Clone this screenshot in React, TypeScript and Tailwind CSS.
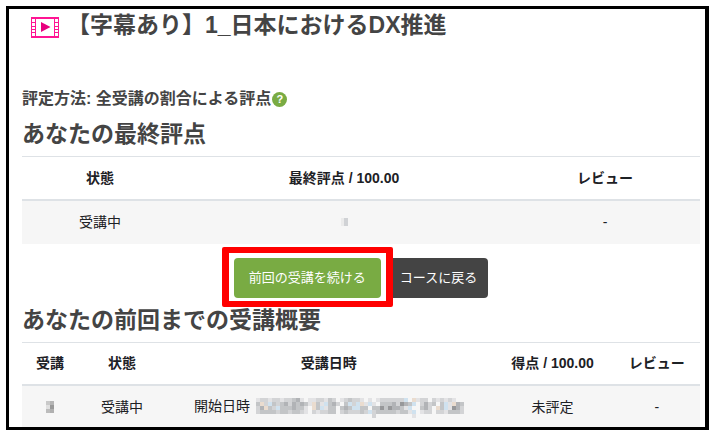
import React from 'react';

// Shade of every tile that hides the date, one string per row of tiles
const dateTiles = [
  '122122122341.1122132.123221.1.1222222b.p122.212121..',
  '3p2b3234243431p31b342.3b2bp1b1.33342543b.2423.3b1p43',
  '24p32b3334331.p3b133.343bb33.335354431b..342.p3b1542',
  '2333323323321.212233.2322232b2333332331b.122.2213332',
  '.............................2.........1............',
];

const tileFill: Record<string, string> = {
  '1': '#e3e3e5',
  '2': '#d3d4d6',
  '3': '#c3c5c7',
  '4': '#b1b3b6',
  '5': '#97989a',
  p: '#eadccf',
  b: '#d0e2ef',
};

function VideoIcon() {
  return (
    <svg viewBox="0 0 28 21" className="mt-2 h-[21px] w-7 shrink-0" aria-hidden="true" shapeRendering="crispEdges">
      <path
        d="M0 0H28V21H0Z M5 2V19H23V2Z M1 2V5H4V2Z M1 6V9H4V6Z M1 10V12H4V10Z M1 13V15H4V13Z M1 16V19H4V16Z M24 2V5H27V2Z M24 6V9H27V6Z M24 10V12H27V10Z M24 13V15H27V13Z M24 16V19H27V16Z"
        fill="#ff1493"
        fillRule="evenodd"
      />
      <path d="M10 5L19.5 10L10 15Z" fill="#e8007f" shapeRendering="auto" />
    </svg>
  );
}

function HiddenDate() {
  return (
    <svg
      viewBox="0 0 208 20"
      className="mt-0.5 ml-0.5 inline-block h-5 w-52 align-top"
      aria-hidden="true"
      shapeRendering="crispEdges"
    >
      {dateTiles.map((row, y) =>
        row.split('').map((tile, x) =>
          tile === '.' ? null : (
            <rect key={`${x}-${y}`} x={x * 4} y={y * 4} width={4} height={4} fill={tileFill[tile]} />
          )
        )
      )}
    </svg>
  );
}

const headCell = 'h-[43px] border-t border-b-2 border-[#dee2e6] p-0 font-bold text-[#1d2125]';
const bodyCell = 'p-0';

export default function App() {
  return (
    <div className="bg-white pt-1.5 pb-[3px] pl-1.5 pr-[5px] font-['Liberation_Sans','Noto_Sans_CJK_JP',sans-serif] text-[#1d2125]">
      <main className="border-[3px] border-r-4 border-black pl-[13px] pr-[5px]">
        <header className="flex items-start pl-[9px]">
          <VideoIcon />
          <h1 className="ml-2 text-[23px] leading-8 font-bold text-[#444] whitespace-nowrap">
            【字幕あり】1_日本におけるDX推進
          </h1>
        </header>

        <div className="mt-[46px] flex items-center text-base leading-6 font-bold text-[#444]">
          <p>評定方法: 全受講の割合による評点</p>
          <button
            type="button"
            aria-label="評定方法のヘルプ"
            className="ml-px flex size-[15px] items-center justify-center rounded-full bg-[#79ab43] text-[11px] leading-none text-white"
          >
            ?
          </button>
        </div>

        {/* Final grade */}
        <h2 className="mt-[7px] text-[23px] leading-8 font-bold text-[#444]">あなたの最終評点</h2>
        <table className="mt-[6px] w-full table-fixed border-collapse text-center text-sm leading-5">
          <thead>
            <tr>
              <th className={`${headCell} w-[23%]`}>状態</th>
              <th className={`${headCell} w-[49%]`}>最終評点 / 100.00</th>
              <th className={headCell}>レビュー</th>
            </tr>
          </thead>
          <tbody>
            <tr className="h-11 bg-[#f6f6f6]">
              <td className={bodyCell}>受講中</td>
              <td className={bodyCell}>
                <span className="mx-auto flex h-2 w-[7px]">
                  <span className="w-[3px] bg-[#ebebeb]" />
                  <span className="w-1 bg-[#d0d2d5]" />
                </span>
              </td>
              <td className={bodyCell}>-</td>
            </tr>
          </tbody>
        </table>

        {/* Actions */}
        <div className="mt-[14px] flex justify-center gap-2 text-[13px] leading-5 text-white">
          <div className="relative">
            <button type="button" className="h-10 rounded bg-[#79ab43] px-[15px] whitespace-nowrap">
              前回の受講を続ける
            </button>
            <span className="pointer-events-none absolute -inset-x-3 -top-[11px] -bottom-[9px] rounded-xs border-x-[7px] border-y-[6px] border-[#f00]" />
          </div>
          <button type="button" className="h-10 rounded bg-[#444] px-[11px] whitespace-nowrap">
            コースに戻る
          </button>
        </div>

        {/* Previous attempts */}
        <h2 className="mt-[6px] text-[23px] leading-8 font-bold text-[#444]">あなたの前回までの受講概要</h2>
        <table className="mt-[6px] w-full table-fixed border-collapse text-center text-sm leading-5">
          <thead>
            <tr>
              <th className={`${headCell} w-[56px]`}>受講</th>
              <th className={`${headCell} w-[13%]`}>状態</th>
              <th className={`${headCell} w-[48%]`}>受講日時</th>
              <th className={`${headCell} w-[18%]`}>得点 / 100.00</th>
              <th className={headCell}>レビュー</th>
            </tr>
          </thead>
          <tbody>
            <tr className="h-[42px] bg-[#f6f6f6]">
              <td className={bodyCell}>
                <span className="mx-auto grid h-3 w-2 grid-cols-2">
                  <span className="bg-[#c9c9c9]" />
                  <span className="bg-[#b5b5b5]" />
                  <span className="bg-[#e0e0e0]" />
                  <span className="bg-[#999]" />
                  <span className="bg-[#bcbcbc]" />
                  <span className="bg-[#b0b0b0]" />
                </span>
              </td>
              <td className={bodyCell}>受講中</td>
              <td className={bodyCell}>
                開始日時 <HiddenDate />
              </td>
              <td className={bodyCell}>未評定</td>
              <td className={bodyCell}>-</td>
            </tr>
          </tbody>
        </table>
      </main>
    </div>
  );
}
